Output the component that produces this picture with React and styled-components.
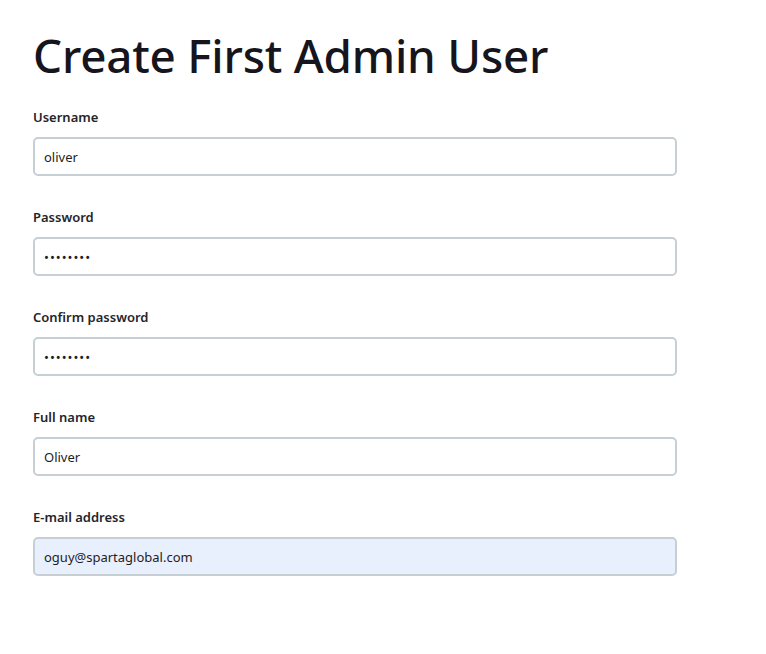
import React from "react";
import styled, { createGlobalStyle } from "styled-components";

const Global = createGlobalStyle`
  html, body { margin: 0; padding: 0; background: #ffffff; }
  body { font-family: "Noto Sans", "Open Sans", sans-serif; color: #1b1a22; }
  * { box-sizing: border-box; }
`;

const Page = styled.div`
  padding: 21px 89px 40px 33px;
`;

const Title = styled.h1`
  margin: 0 0 19px 0;
  font-size: 45.8px;
  font-weight: 500;
  line-height: 68px;
  letter-spacing: -0.2px;
  color: #16151d;
`;

const Form = styled.form`
  display: flex;
  flex-direction: column;
  gap: 32px;
  width: 644px;
`;

const Field = styled.div`
  display: flex;
  flex-direction: column;
  gap: 11px;
`;

const Label = styled.label`
  font-size: 13px;
  font-weight: 600;
  line-height: 18px;
  color: #26242a;
`;

const Input = styled.input`
  height: 39px;
  width: 100%;
  border: 2px solid #c6cfd3;
  border-radius: 5px;
  padding: 0 9px;
  font-family: "Noto Sans", "Open Sans", sans-serif;
  font-size: 13px;
  color: #1f1d22;
  background: ${(p) => (p.$autofill ? "#e8f0fe" : "#ffffff")};
  outline: none;
  letter-spacing: ${(p) => (p.type === "password" ? "1px" : "0")};
`;

const fields = [
  { label: "Username", type: "text", value: "oliver" },
  { label: "Password", type: "password", value: "password" },
  { label: "Confirm password", type: "password", value: "password" },
  { label: "Full name", type: "text", value: "Oliver" },
  { label: "E-mail address", type: "email", value: "oguy@spartaglobal.com", autofill: true },
];

export default function App() {
  return (
    <>
      <Global />
      <Page>
        <Title>Create First Admin User</Title>
        <Form onSubmit={(e) => e.preventDefault()}>
          {fields.map((f) => (
            <Field key={f.label}>
              <Label>{f.label}</Label>
              <Input type={f.type} defaultValue={f.value} $autofill={f.autofill} readOnly />
            </Field>
          ))}
        </Form>
      </Page>
    </>
  );
}
